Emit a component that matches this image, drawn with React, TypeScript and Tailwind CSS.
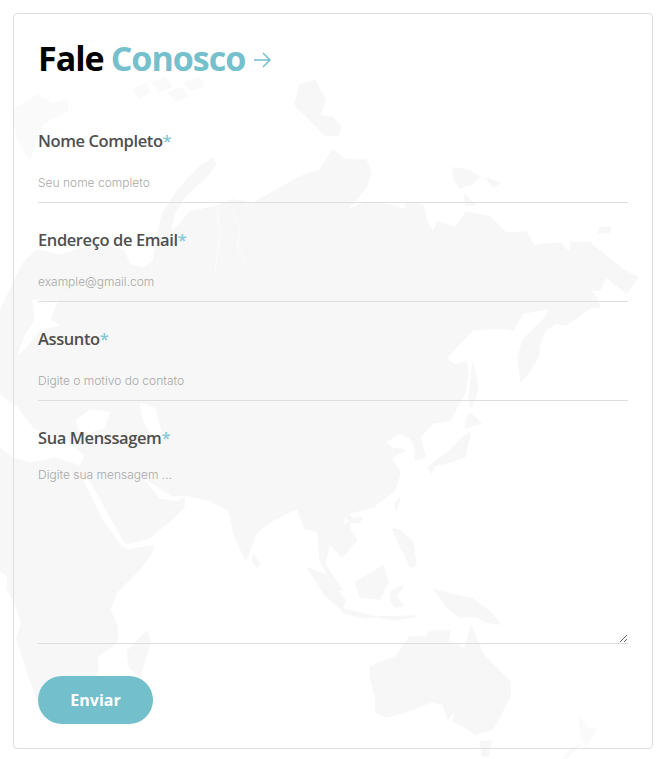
import React from "react";

const LAND = [
  // Eurasia
  "M0,312 L12,285 L24,262 L37,250 L60,255 L80,249 L100,246 L123,250 L130,265 L143,268 L153,262 L157,240 L162,215 L178,190 L198,168 L213,158 L216,164 L205,178 L185,196 L175,212 L170,232 L178,226 L190,212 L213,207 L233,200 L253,203 L277,190 L300,177 L320,170 L333,150 L346,160 L366,160 L371,173 L366,187 L353,203 L343,212 L366,202 L390,205 L405,210 L406,202 L423,205 L426,220 L433,233 L438,222 L455,228 L461,220 L466,212 L490,217 L506,233 L526,232 L535,247 L538,245 L560,243 L570,253 L571,242 L590,243 L620,267 L623,270 L638,278 L626,293 L606,277 L600,290 L590,290 L596,297 L600,307 L590,308 L573,320 L566,325 L556,323 L546,330 L540,343 L538,357 L530,370 L521,382 L518,357 L523,340 L536,327 L546,317 L550,308 L540,310 L523,313 L513,330 L500,328 L473,330 L463,340 L446,358 L455,365 L466,362 L468,373 L465,393 L450,420 L433,423 L420,437 L425,457 L416,460 L415,447 L410,438 L400,433 L385,442 L391,448 L405,450 L391,458 L400,473 L395,490 L373,507 L353,512 L345,515 L343,524 L350,528 L346,513 L357,522 L346,523 L357,540 L342,557 L329,543 L325,565 L342,590 L335,590 L320,560 L318,532 L305,528 L297,508 L273,520 L256,533 L246,560 L235,537 L229,510 L209,500 L184,495 L184,507 L171,520 L150,537 L128,546 L103,513 L85,480 L60,462 L0,462 Z",
  // Africa
  "M0,455 L60,458 L85,478 L125,546 L153,546 L153,550 L140,569 L117,592 L110,609 L117,626 L117,642 L97,657 L98,669 L85,698 L80,715 L50,720 L37,699 L27,670 L17,639 L22,622 L13,599 L7,589 L8,576 L0,571 Z",
  // Severnaya Zemlya and the islands of the far north east
  "M300,85 L315,80 L325,100 L320,115 L333,118 L341,127 L338,135 L325,135 L310,120 L295,105 Z",
  "M453,168 L468,170 L480,177 L473,183 L460,188 L454,180 Z M486,178 L500,183 L493,187 Z M465,195 L475,205 L466,205 Z M600,228 L610,227 L610,232 L598,233 Z",
  // Sakhalin, Japan, Taiwan, Hainan
  "M473,363 L478,390 L471,407 L469,397 Z M470,413 L481,423 L466,428 L465,423 Z M470,433 L465,457 L446,463 L430,467 L433,463 L451,450 L463,437 Z M428,467 L435,465 L431,473 Z M395,503 L400,498 L396,510 Z M355,518 L362,518 L359,523 Z",
  // Philippines
  "M393,529 L400,530 L413,542 L416,566 L410,567 L404,552 L400,546 Z",
  // Borneo, Sumatra, Java, Sulawesi, New Guinea
  "M356,582 L383,566 L388,582 L380,599 L360,597 Z",
  "M308,568 L325,575 L345,600 L342,610 L325,595 Z M343,609 L376,617 L366,618 L343,613 Z M376,617 L416,616 L395,620 Z",
  "M390,592 L403,586 L396,596 L403,606 L395,607 L391,601 Z",
  "M433,589 L450,594 L473,599 L490,612 L500,624 L486,622 L476,616 L460,617 L446,606 L440,597 Z",
  // Australia and Tasmania
  "M371,666 L396,657 L410,637 L426,637 L430,631 L450,631 L448,641 L465,649 L471,626 L483,654 L510,682 L510,696 L493,729 L476,734 L463,726 L453,721 L456,709 L448,719 L443,704 L431,702 L405,712 L386,717 L376,712 L376,699 L370,676 Z",
  "M480,742 L491,741 L488,756 L483,756 Z",
  // Madagascar, Sri Lanka
  "M147,631 L150,642 L140,676 L130,669 L128,659 L128,651 Z M253,554 L260,564 L257,567 L253,562 Z",
];

const PALE_LAND = [
  // Scandinavia
  "M13,110 L38,95 L52,104 L67,100 L68,110 L43,123 L35,142 L30,160 L24,150 L17,137 Z",
  // Franz Josef Land
  "M133,90 L146,83 L150,91 L140,98 Z M152,82 L165,78 L172,86 L160,92 Z M168,92 L182,88 L188,97 L176,101 Z M185,82 L200,78 L203,86 L190,90 Z",
  // New Zealand
  "M580,717 L588,729 L596,729 L586,746 L581,737 Z M581,744 L566,759 L563,759 L571,749 Z",
];

const WATER = [
  // Baltic
  "M33,300 L57,302 L50,320 L60,325 L40,330 L28,345 L18,355 L25,335 L35,320 Z",
  // Mediterranean
  "M0,395 L18,408 L33,428 L55,440 L62,438 L84,455 L80,465 L55,457 L30,462 L13,457 L0,447 Z",
  // Black Sea
  "M76,420 L90,410 L110,412 L104,428 L88,433 L78,430 Z",
  // Caspian
  "M140,403 L155,408 L163,440 L150,433 L143,420 Z",
  // Red Sea
  "M83,478 L90,482 L122,540 L128,547 L123,547 L103,520 Z",
  // Gulf of Aden
  "M124,545 L152,539 L158,531 L156,544 L127,549 Z",
  // Persian Gulf
  "M145,480 L152,484 L172,497 L184,496 L178,501 L160,498 Z",
];

const RIVERS = [
  "M233,210 L240,230 L237,247 L247,263",
  "M217,207 L220,233 L215,273",
];

function Field({ label, placeholder }: { label: string; placeholder: string }) {
  return (
    <div className="mb-[25px]">
      <label className="block h-6 text-[16.5px] leading-6 font-semibold tracking-[-0.4px] text-[#4f4f4f] [font-family:'Open_Sans',sans-serif]">
        {label}
        <span className="text-[#86c9d5]">*</span>
      </label>
      <input
        placeholder={placeholder}
        className="mt-[13px] block h-[37px] w-full border-b border-[#dedede] bg-transparent pb-1 text-xs font-light outline-none placeholder:text-[#a8a8a8] [font-family:'Inter',sans-serif]"
      />
    </div>
  );
}

export default function App() {
  return (
    <div className="relative h-[759px] w-[667px] overflow-hidden bg-white pt-[13px] pr-px">
      <svg
        className="absolute top-0 left-0"
        width="667"
        height="759"
        viewBox="0 0 667 759"
        aria-hidden="true"
      >
        {LAND.map((d, i) => (
          <path key={i} d={d} fill="#f7f7f7" stroke="#f7f7f7" strokeWidth="1.5" strokeLinejoin="round" />
        ))}
        {PALE_LAND.map((d, i) => (
          <path key={i} d={d} fill="#fafafa" stroke="#fafafa" strokeWidth="1.5" strokeLinejoin="round" />
        ))}
        {WATER.map((d, i) => (
          <path key={i} d={d} fill="#ffffff" stroke="#ffffff" strokeWidth="1" strokeLinejoin="round" />
        ))}
        {RIVERS.map((d, i) => (
          <path key={i} d={d} fill="none" stroke="#fcfcfc" strokeWidth="1" strokeLinejoin="round" />
        ))}
      </svg>

      <form className="relative mx-[13px] h-[736px] rounded border border-[#dedede] p-6">
        <h2 className="mb-[51px] flex h-10 items-center text-[34px] leading-10 font-bold tracking-[-1px] [font-family:'Open_Sans',sans-serif]">
          <span className="text-black">Fale</span>
          <span className="ml-[7px] text-[#74c0cd]">Conosco</span>
          <svg
            className="mt-[3px] ml-[8px]"
            width="18"
            height="16"
            viewBox="0 0 18 16"
            fill="none"
            stroke="#74c0cd"
            strokeWidth="1.5"
          >
            <path d="M1 8H17M10 1L17 8L10 15" />
          </svg>
        </h2>

        <Field label="Nome Completo" placeholder="Seu nome completo" />
        <Field label="Endereço de Email" placeholder="example@gmail.com" />
        <Field label="Assunto" placeholder="Digite o motivo do contato" />

        <label className="block h-6 text-[16.5px] leading-6 font-semibold tracking-[-0.4px] text-[#4f4f4f] [font-family:'Open_Sans',sans-serif]">
          Sua Menssagem<span className="text-[#86c9d5]">*</span>
        </label>
        <textarea
          placeholder="Digite sua mensagem ..."
          className="mt-[13px] mb-[32px] block h-[181px] w-full border-b border-[#dedede] bg-transparent pt-1 text-xs leading-4 font-light outline-none placeholder:text-[#a8a8a8] [font-family:'Inter',sans-serif]"
        />

        <button
          type="button"
          className="block h-12 w-[115px] rounded-3xl bg-[#73bfcc] text-base font-bold text-white [font-family:'Open_Sans',sans-serif]"
        >
          Enviar
        </button>
      </form>
    </div>
  );
}
